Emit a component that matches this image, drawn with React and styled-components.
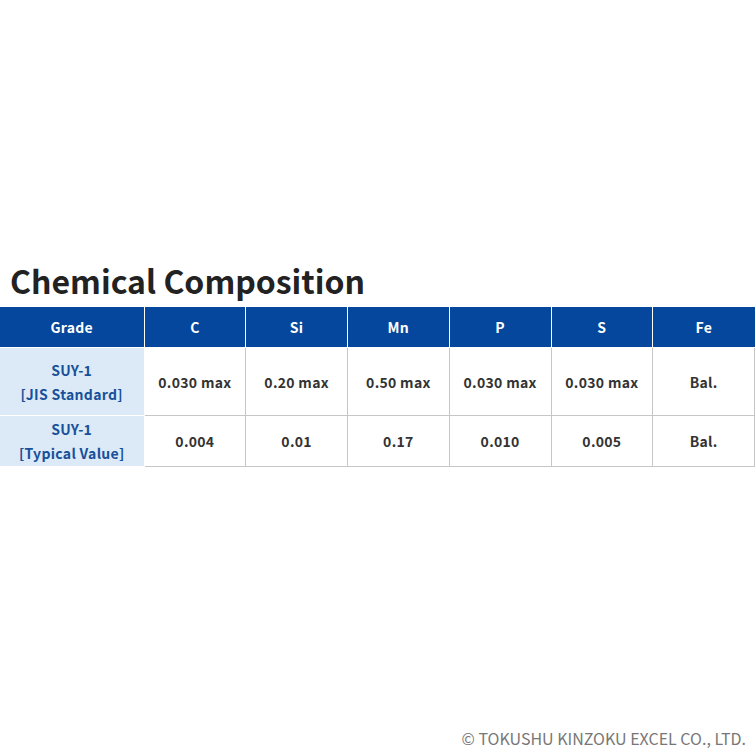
import styled, { createGlobalStyle } from "styled-components";

const GlobalStyle = createGlobalStyle`
  html, body {
    margin: 0;
    padding: 0;
    background: #fff;
  }
  body {
    font-family: "Noto Sans CJK JP", "Noto Sans", sans-serif;
  }
`

const Page = styled.div`
  width: 756px;
  height: 756px;
  display: flex;
  flex-direction: column;
  box-sizing: border-box;
  padding-top: 259px;
`

const Title = styled.h2`
  margin: 0 0 6px 10px;
  font-size: 32px;
  line-height: 42px;
  font-weight: 700;
  color: #222;
`

const Table = styled.table`
  width: 755px;
  border-collapse: collapse;
  table-layout: fixed;
  font-size: 14px;
  font-weight: 700;
  letter-spacing: 0.3px;
`

const HeadCell = styled.th`
  background: #04479c;
  color: #fff;
  height: 40px;
  padding: 0;
  border: 1px solid #fff;
  border-top: none;
  font-weight: 700;
  &:first-child {
    border-left: none;
  }
  &:last-child {
    border-right: none;
  }
`

const GradeCell = styled.td`
  background: #dce9f6;
  color: #17509b;
  text-align: center;
  padding: 0;
  height: ${p => p.$h}px;
  border: 1px solid #fff;
  border-left: none;
  line-height: 24px;
`

const ValueCell = styled.td`
  color: #333;
  text-align: center;
  padding: 0;
  border: 1px solid #c6c6c6;
`

const Footer = styled.div`
  margin-top: auto;
  padding: 0 10px 6px 0;
  text-align: right;
  font-size: 16px;
  font-weight: 400;
  color: #777;
`

const columns = ["C", "Si", "Mn", "P", "S", "Fe"];

const rows = [
  { name: "SUY-1", note: "[JIS Standard]", h: 67, values: ["0.030 max", "0.20 max", "0.50 max", "0.030 max", "0.030 max", "Bal."] },
  { name: "SUY-1", note: "[Typical Value]", h: 50, values: ["0.004", "0.01", "0.17", "0.010", "0.005", "Bal."] },
];

export default function App() {
  return (
    <>
      <GlobalStyle/>
      <Page>
        <Title>Chemical Composition</Title>
        <Table>
          <colgroup>
            <col style={{width: 144}}/>
            {columns.map(c => <col key={c}/>)}
          </colgroup>
          <thead>
            <tr>
              <HeadCell>Grade</HeadCell>
              {columns.map(c => <HeadCell key={c}>{c}</HeadCell>)}
            </tr>
          </thead>
          <tbody>
            {rows.map((r, i) => (
              <tr key={i}>
                <GradeCell $h={r.h}>{r.name}<br/>{r.note}</GradeCell>
                {r.values.map((v, j) => <ValueCell key={j}>{v}</ValueCell>)}
              </tr>
            ))}
          </tbody>
        </Table>
        <Footer>© TOKUSHU KINZOKU EXCEL CO., LTD.</Footer>
      </Page>
    </>
  )
}
